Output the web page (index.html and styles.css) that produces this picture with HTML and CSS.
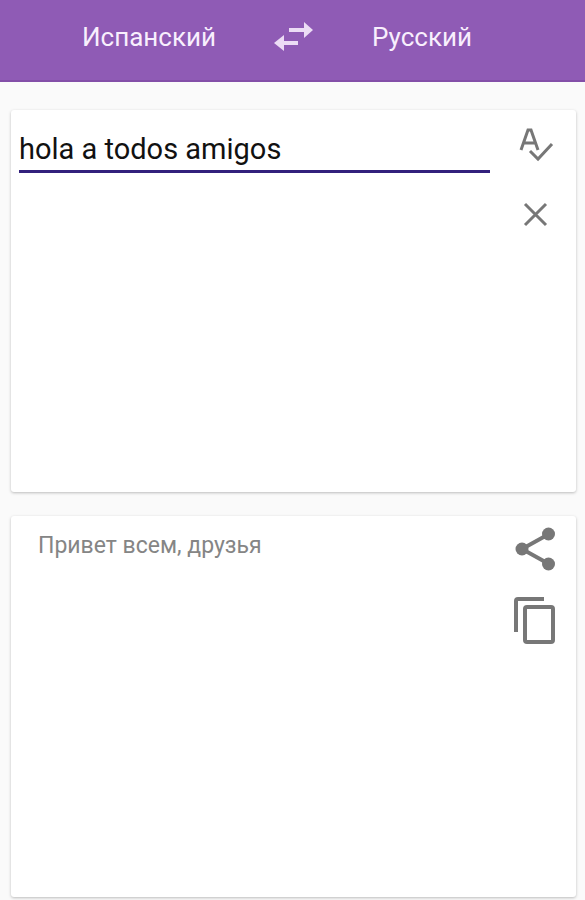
FILE: index.html
```html
<!DOCTYPE html>
<html lang="ru">
<head>
<meta charset="utf-8">
<meta name="viewport" content="width=device-width, initial-scale=1">
<title>Переводчик</title>
<link rel="stylesheet" href="styles.css">
</head>
<body>
<header class="bar">
  <button class="lang" type="button">Испанский</button>
  <button class="swap" type="button" aria-label="Поменять языки">
    <svg width="40" height="30" viewBox="0 0 40 30" fill="currentColor"><path d="M15 6h15V0l9 8-9 8v-6H15zM24 19v4H10v6l-10-8 10-8v6z"/></svg>
  </button>
  <button class="lang" type="button">Русский</button>
</header>
<main class="cards">
  <section class="card">
    <input class="source" type="text" value="hola a todos amigos" aria-label="Исходный текст">
    <div class="tools">
      <button class="tool" type="button" aria-label="Проверить правописание">
        <svg width="48" height="48" viewBox="0 0 48 48" fill="none" stroke="currentColor" stroke-width="3"><path d="M9 32l7-20h3l7 20M12 25h11M18 33l8 8 14-15"/></svg>
      </button>
      <button class="tool" type="button" aria-label="Очистить">
        <svg width="48" height="48" viewBox="0 0 48 48" fill="none" stroke="currentColor" stroke-width="3"><path d="M13 14l21 21M34 14L13 35"/></svg>
      </button>
    </div>
  </section>
  <section class="card">
    <p class="result">Привет всем, друзья</p>
    <div class="tools">
      <button class="tool" type="button" aria-label="Поделиться">
        <svg width="48" height="48" viewBox="0 0 48 48" fill="currentColor"><path d="M37 10L10 25l27 15" fill="none" stroke="currentColor" stroke-width="4"/><circle cx="10" cy="25" r="6.5"/><circle cx="36.5" cy="10" r="6.5"/><circle cx="36.5" cy="40" r="6.5"/></svg>
      </button>
      <button class="tool" type="button" aria-label="Копировать">
        <svg width="48" height="48" viewBox="0 0 48 48" fill="none" stroke="currentColor" stroke-width="4"><path d="M4 36V5q0-2 2-2h26"/><rect x="13" y="11" width="28" height="35" rx="2"/></svg>
      </button>
    </div>
  </section>
</main>
</body>
</html>
```
FILE: styles.css
```css
* {
  box-sizing: border-box;
}

body {
  margin: 0;
  min-height: 100vh;
  display: flex;
  flex-direction: column;
  background: #fafafa;
  font-family: Roboto, "Noto Sans", sans-serif;
}

button {
  border: 0;
  padding: 0;
  background: none;
  font: inherit;
  color: inherit;
  cursor: pointer;
}

svg {
  display: block;
}

.bar {
  display: flex;
  justify-content: center;
  align-items: center;
  gap: 58px;
  padding: 21px 31px 27px 0;
  background: #8f5bb5;
  border-bottom: 2px solid #834fa8;
  color: #f8effd;
}

.lang {
  font-size: 26px;
  line-height: 32px;
}

.swap {
  color: #ecdcf5;
}

.cards {
  flex: 1;
  display: grid;
  grid-template-rows: 1fr 1fr;
  gap: 24px;
  padding: 28px 9px 3px 11px;
}

.card {
  display: flex;
  justify-content: space-between;
  align-items: flex-start;
  padding: 8px 16px 8px 8px;
  background: #fff;
  border-radius: 3px;
  box-shadow: 0 1px 3px rgba(0, 0, 0, 0.25);
}

.source {
  flex: 1;
  min-width: 0;
  margin-right: 22px;
  padding: 13px 0 3px;
  border: 0;
  border-bottom: 3px solid #32207c;
  outline: 0;
  background: none;
  font-family: inherit;
  font-size: 29px;
  line-height: 36px;
  color: #111;
}

.result {
  margin: 8px 0 0 19px;
  font-size: 23px;
  line-height: 28px;
  color: #858585;
}

.tools {
  display: grid;
  gap: 24px;
  color: #777;
}
```
